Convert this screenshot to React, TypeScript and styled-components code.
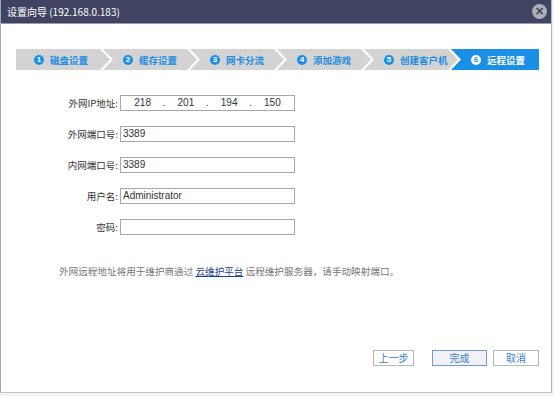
import styled, { createGlobalStyle } from "styled-components";

const GlobalStyle = createGlobalStyle`
  body {
    margin: 0;
    background: #f4f4f4;
    font-family: "Noto Sans CJK SC", "Liberation Sans", sans-serif;
  }
`;

const steps = ["磁盘设置", "缓存设置", "网卡分流", "添加游戏", "创建客户机", "远程设置"];

const App = () => {
  return (
    <>
      <GlobalStyle />
      <Dialog>
        <TitleBar>
          <Title>设置向导 (192.168.0.183)</Title>
          <CloseButton>×</CloseButton>
        </TitleBar>
        <Steps>
          {steps.map((label, index) => (
            <Step
              key={label}
              $first={index === 0}
              $last={index === steps.length - 1}
              $active={index === steps.length - 1}
            >
              <StepNumber $active={index === steps.length - 1}>{index + 1}</StepNumber>
              {label}
            </Step>
          ))}
        </Steps>
        <Form>
          <Label>外网IP地址:</Label>
          <IpBox>
            <IpPart>218</IpPart>
            <Dot>.</Dot>
            <IpPart>201</IpPart>
            <Dot>.</Dot>
            <IpPart>194</IpPart>
            <Dot>.</Dot>
            <IpPart>150</IpPart>
          </IpBox>
          <Label>外网端口号:</Label>
          <Field>3389</Field>
          <Label>内网端口号:</Label>
          <Field>3389</Field>
          <Label>用户名:</Label>
          <Field>Administrator</Field>
          <Label>密码:</Label>
          <Field />
        </Form>
        <Note>
          外网远程地址将用于维护商通过 <NoteLink>云维护平台</NoteLink> 远程维护服务器，请手动映射端口。
        </Note>
        <Footer>
          <Button $width={41}>上一步</Button>
          <Button $width={55} $primary>完成</Button>
          <Button $width={46}>取消</Button>
        </Footer>
      </Dialog>
    </>
  );
};

const Dialog = styled.div`
  width: 550px;
  height: 392px;
  background: #fff;
  border-left: 1px solid #a6a6bb;
  border-right: 1px solid #b4b4c4;
  border-bottom: 1px solid #c6c6c6;
  display: flex;
  flex-direction: column;
`;

const TitleBar = styled.div`
  height: 23px;
  background: #404462;
  border-bottom: 1px solid #9a9db2;
  display: flex;
  align-items: center;
  justify-content: space-between;
  padding: 0 4px 0 6px;
`;

const Title = styled.div`
  color: #fff;
  font-size: 10px;
  line-height: 14px;
`;

const CloseButton = styled.div`
  width: 15px;
  height: 15px;
  border-radius: 50%;
  background: #aeafb8;
  color: #3b3e55;
  font-family: "DejaVu Sans", sans-serif;
  font-size: 12px;
  font-weight: bold;
  line-height: 15px;
  text-align: center;
`;

const Steps = styled.div`
  display: flex;
  margin: 25px 0 0 15px;
  height: 21px;
`;

const Step = styled.div<{ $first?: boolean; $last?: boolean; $active?: boolean }>`
  width: ${(p) => (p.$last ? 88 : 94)}px;
  margin-left: ${(p) => (p.$first ? 0 : -7)}px;
  background: ${(p) => (p.$active ? "#1a8fe6" : "#d3d3d3")};
  color: ${(p) => (p.$active ? "#fff" : "#1e8ce0")};
  display: flex;
  align-items: center;
  gap: 6px;
  padding-left: ${(p) => (p.$first ? 18 : 20)}px;
  box-sizing: border-box;
  font-size: 9.5px;
  font-weight: bold;
  white-space: nowrap;
  clip-path: ${(p) =>
    p.$first
      ? "polygon(0 0, calc(100% - 10px) 0, 100% 50%, calc(100% - 10px) 100%, 0 100%)"
      : p.$last
      ? "polygon(0 0, 100% 0, 100% 100%, 0 100%, 10px 50%)"
      : "polygon(0 0, calc(100% - 10px) 0, 100% 50%, calc(100% - 10px) 100%, 0 100%, 10px 50%)"};
`;

const StepNumber = styled.span<{ $active?: boolean }>`
  width: 10px;
  height: 10px;
  border-radius: 50%;
  background: ${(p) => (p.$active ? "#fff" : "#1a8fe6")};
  color: ${(p) => (p.$active ? "#1a8fe6" : "#fff")};
  font-family: "Liberation Sans", sans-serif;
  font-size: 8px;
  font-weight: bold;
  line-height: 10px;
  text-align: center;
  flex-shrink: 0;
`;

const Form = styled.div`
  display: grid;
  grid-template-columns: 119px 175px;
  grid-auto-rows: 16px;
  row-gap: 15px;
  margin-top: 25px;
`;

const Label = styled.div`
  text-align: right;
  font-size: 9.5px;
  line-height: 16px;
  color: #333;
  padding-right: 2px;
`;

const Field = styled.div`
  border: 1px solid #a8a8a8;
  box-sizing: border-box;
  height: 16px;
  padding-left: 2px;
  font-family: "Liberation Sans", sans-serif;
  font-size: 10px;
  line-height: 14px;
  color: #333;
`;

const IpBox = styled(Field)`
  display: flex;
  padding-left: 0;
`;

const IpPart = styled.span`
  flex: 1;
  text-align: center;
`;

const Dot = styled.span`
  width: 0;
  display: flex;
  justify-content: center;
`;

const Note = styled.div`
  margin: 29px 0 0 58px;
  font-size: 9.6px;
  line-height: 14px;
  color: #777;
`;

const NoteLink = styled.span`
  color: #1c3f94;
  text-decoration: underline;
`;

const Footer = styled.div`
  margin-top: auto;
  display: flex;
  justify-content: flex-end;
  gap: 6px;
  padding: 0 12px 26px 0;
`;

const Button = styled.div<{ $width: number; $primary?: boolean }>`
  width: ${(p) => p.$width}px;
  height: 16px;
  box-sizing: border-box;
  border: 1px solid ${(p) => (p.$primary ? "#6f9ad0" : "#b8b8b8")};
  background: ${(p) => (p.$primary ? "#f2f1f8" : "#fff")};
  color: #3a80d2;
  font-size: 10px;
  line-height: 14px;
  text-align: center;
  &:first-child {
    margin-right: 12px;
  }
`;

export default App;
